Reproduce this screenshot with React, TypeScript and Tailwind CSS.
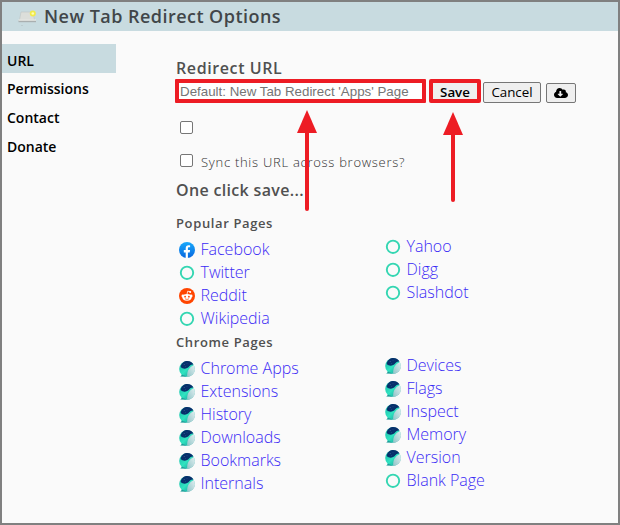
import React from "react";
import { FaCloudDownloadAlt } from "react-icons/fa";

type Kind = "ring" | "globe" | "facebook" | "reddit";
type Item = { label: string; kind: Kind };

function SiteIcon({ kind }: { kind: Kind }) {
  if (kind === "ring")
    return (
      <svg className="h-4 w-4 shrink-0" viewBox="0 0 16 16">
        <circle cx="8" cy="7.8" r="6.2" fill="none" stroke="#34d6b2" strokeWidth="1.9" />
      </svg>
    );
  if (kind === "facebook")
    return (
      <svg className="h-4 w-4 shrink-0" viewBox="0 0 16 16">
        <defs>
          <linearGradient id="fb" x1="0" y1="0" x2="0" y2="1">
            <stop offset="0" stopColor="#18a9fb" />
            <stop offset="1" stopColor="#0866df" />
          </linearGradient>
        </defs>
        <circle cx="8" cy="8" r="8" fill="url(#fb)" />
        <path d="M6.7 16v-5.6H4.8V8.1h1.9V6.4c0-2.1 1.1-3.2 3-3.2.7 0 1.2.1 1.4.2v1.9h-1.1c-.8 0-1.1.4-1.1 1.1v1.7h2.2l-.4 2.3H8.9V16Z" fill="#fff" />
      </svg>
    );
  if (kind === "reddit")
    return (
      <svg className="h-4 w-4 shrink-0" viewBox="0 0 16 16">
        <circle cx="8" cy="8" r="8" fill="#ff4500" />
        <path d="M8 6.3 8.7 3.2 11 3.7" fill="none" stroke="#fff" strokeWidth=".8" />
        <circle cx="11.2" cy="3.9" r="1" fill="#fff" />
        <circle cx="3.8" cy="7.9" r="1.3" fill="#fff" />
        <circle cx="12.2" cy="7.9" r="1.3" fill="#fff" />
        <ellipse cx="8" cy="9.3" rx="4.6" ry="3.4" fill="#fff" />
        <circle cx="6.1" cy="8.7" r=".9" fill="#ff4500" />
        <circle cx="9.9" cy="8.7" r=".9" fill="#ff4500" />
        <path d="M6 10.8q2 1.3 4 0" fill="none" stroke="#ff4500" strokeWidth=".7" />
      </svg>
    );
  return (
    <svg className="h-4 w-4 shrink-0" viewBox="0 0 16 16">
      <defs>
        <linearGradient id="gl" x1="0" y1="0" x2="1" y2="1">
          <stop offset="0" stopColor="#17b9a8" />
          <stop offset=".5" stopColor="#30e3c0" />
          <stop offset="1" stopColor="#168f93" />
        </linearGradient>
        <linearGradient id="gr" x1="1" y1="0" x2="0" y2="1">
          <stop offset="0" stopColor="#e2eff0" />
          <stop offset="1" stopColor="#8fc4c8" />
        </linearGradient>
      </defs>
      <circle cx="8" cy="8" r="7.8" fill="url(#gl)" />
      <path d="M.2 15.6c1.6-.3 2.2-.9 2.6-2.2L8 15.7Z" fill="#1b9c98" />
      <path d="M8.2 15.8C7.8 10 10 6.4 14.7 4c3 5 .2 11.5-6.5 11.8Z" fill="url(#gr)" />
      <path d="M1.7 6C2.4 1.8 5.4 0 8.4.1c3 .1 5.1 1.5 6.2 3.6-1.5-.6-3.1 0-4.5 1.8C8.3 7.8 4.2 8.7 1.7 6Z" fill="#07306b" />
      <circle cx="5.2" cy="3.6" r=".5" fill="#3d659a" />
      <circle cx="8" cy="2.6" r=".4" fill="#3d659a" />
      <circle cx="6.5" cy="5.7" r=".4" fill="#3d659a" />
    </svg>
  );
}

function LinkList({ items, className }: { items: Item[]; className: string }) {
  return (
    <ul className={className}>
      {items.map((i) => (
        <li key={i.label} className="flex h-[23px] items-center gap-[5.5px]">
          <SiteIcon kind={i.kind} />
          <a className="text-[16px] leading-[23px] font-light whitespace-nowrap text-[#3a2bf5]">{i.label}</a>
        </li>
      ))}
    </ul>
  );
}

function Arrow({ className, length }: { className: string; length: number }) {
  return (
    <svg className={"absolute " + className} width="20" height={length} viewBox={`0 0 20 ${length}`}>
      <path d={`M10 20V${length - 2}`} stroke="#ed1c24" strokeWidth="4" strokeLinecap="round" />
      <path d="M10 0 20 23H0Z" fill="#ed1c24" />
    </svg>
  );
}

const popularLeft: Item[] = [
  { label: "Facebook", kind: "facebook" },
  { label: "Twitter", kind: "ring" },
  { label: "Reddit", kind: "reddit" },
  { label: "Wikipedia", kind: "ring" },
];
const popularRight: Item[] = [
  { label: "Yahoo", kind: "ring" },
  { label: "Digg", kind: "ring" },
  { label: "Slashdot", kind: "ring" },
];
const chromeLeft: Item[] = ["Chrome Apps", "Extensions", "History", "Downloads", "Bookmarks", "Internals"].map((label) => ({ label, kind: "globe" }));
const chromeRight: Item[] = [
  ...["Devices", "Flags", "Inspect", "Memory", "Version"].map((label): Item => ({ label, kind: "globe" })),
  { label: "Blank Page", kind: "ring" },
];

export default function App() {
  return (
    <div className="relative h-[525px] w-[620px] overflow-hidden border-2 border-[#808080] bg-[#fafafa] font-['Open_Sans','Noto_Sans',sans-serif]">
      <header className="flex h-[29px] items-center bg-[#c8dbe0] pl-4">
        <svg className="h-5 w-[19px]" viewBox="0 0 19 20">
          <path d="M3 5h12l1.5 8h-15Z" fill="#dcdeda" stroke="#bfc4c3" strokeWidth=".6" />
          <path d="M.5 13h17.5v2.2H.5Z" fill="#a9afb0" />
          <path d="M.5 12.5h17.5v1.2H.5Z" fill="#efefeb" />
          <circle cx="14.8" cy="6.5" r="3" fill="#f1eb4a" />
          <circle cx="14.8" cy="6.5" r="1.3" fill="#fffcb5" />
          <path d="M3.5 18.5h1" stroke="#a9b5b8" strokeWidth=".8" />
        </svg>
        <h1 className="ml-[7px] text-[18px] leading-[29px] font-semibold tracking-[0.46px] whitespace-nowrap text-[#414649]">New Tab Redirect Options</h1>
      </header>
      <div className="flex">
        <nav className="mt-[13px] w-[114px] shrink-0 text-[14px] font-semibold text-black">
          <div className="h-[29px] bg-[#c8dbe0] pt-[3px] pl-[5px] leading-[28px]">URL</div>
          <div className="h-[29px] pt-[2px] pl-[5px] leading-[28px]">Permissions</div>
          <div className="h-[29px] pt-[2px] pl-[5px] leading-[28px]">Contact</div>
          <div className="h-[29px] pt-[2px] pl-[5px] leading-[28px]">Donate</div>
        </nav>
        <main className="ml-[59px] pt-[24px] text-[#505050]">
          <h2 className="ml-[1px] h-[24px] text-[16px] leading-[26px] font-semibold tracking-[0.6px]">Redirect URL</h2>
          <div className="flex h-6 items-end">
            <div className="h-6 w-[251px] rounded-[1px] border-4 border-[#ed1c24] bg-white pl-[1px] font-['Liberation_Sans',Arial,sans-serif] text-[13.33px] leading-[18px] whitespace-nowrap text-[#757575]">
              Default: New Tab Redirect 'Apps' Page
            </div>
            <button className="ml-[3px] h-6 w-[52px] rounded-[2px] border-4 border-[#ed1c24] bg-[#efefef] text-[13.33px] leading-[18px] font-semibold text-black">Save</button>
            <button className="ml-[2px] h-[21px] w-[58px] rounded-[2px] border border-[#767676] bg-[#efefef] text-[13.33px] leading-[19px] text-black">Cancel</button>
            <button className="ml-[5px] flex h-5 w-[30px] items-center justify-center rounded-[2px] border border-[#767676] bg-[#efefef] text-black">
              <FaCloudDownloadAlt size={14} />
            </button>
          </div>
          <div className="mt-[18px] ml-[5px] h-[13px] w-[13px] rounded-[2px] border border-[#767676] bg-white" />
          <div className="mt-[18px] ml-[5px] flex h-[18px] items-center">
            <div className="mb-[1px] h-[13px] w-[13px] rounded-[2px] border border-[#767676] bg-white" />
            <span className="mt-[2px] ml-2 text-[13px] leading-[18px] font-light tracking-[0.72px] whitespace-nowrap text-[#303030]">Sync this URL across browsers?</span>
          </div>
          <h2 className="mt-[7px] ml-[1px] h-[26px] text-[16px] leading-[26px] font-semibold tracking-[0.33px]">One click save...</h2>
          <h3 className="mt-[11px] ml-[1px] h-[18px] text-[13px] leading-[18px] font-semibold tracking-[0.62px]">Popular Pages</h3>
          <div className="mt-[3px] flex h-[98px]">
            <LinkList className="mt-[3px] ml-[4px] w-[206px]" items={popularLeft} />
            <LinkList items={popularRight} className="" />
          </div>
          <h3 className="ml-[1px] h-[18px] text-[13px] leading-[18px] font-semibold tracking-[0.62px]">Chrome Pages</h3>
          <div className="mt-[3px] flex">
            <LinkList className="mt-[3px] ml-[4px] w-[206px]" items={chromeLeft} />
            <LinkList items={chromeRight} className="" />
          </div>
        </main>
      </div>
      <Arrow className="top-[108px] left-[295px]" length={101} />
      <Arrow className="top-[110px] left-[441px]" length={90} />
    </div>
  );
}
